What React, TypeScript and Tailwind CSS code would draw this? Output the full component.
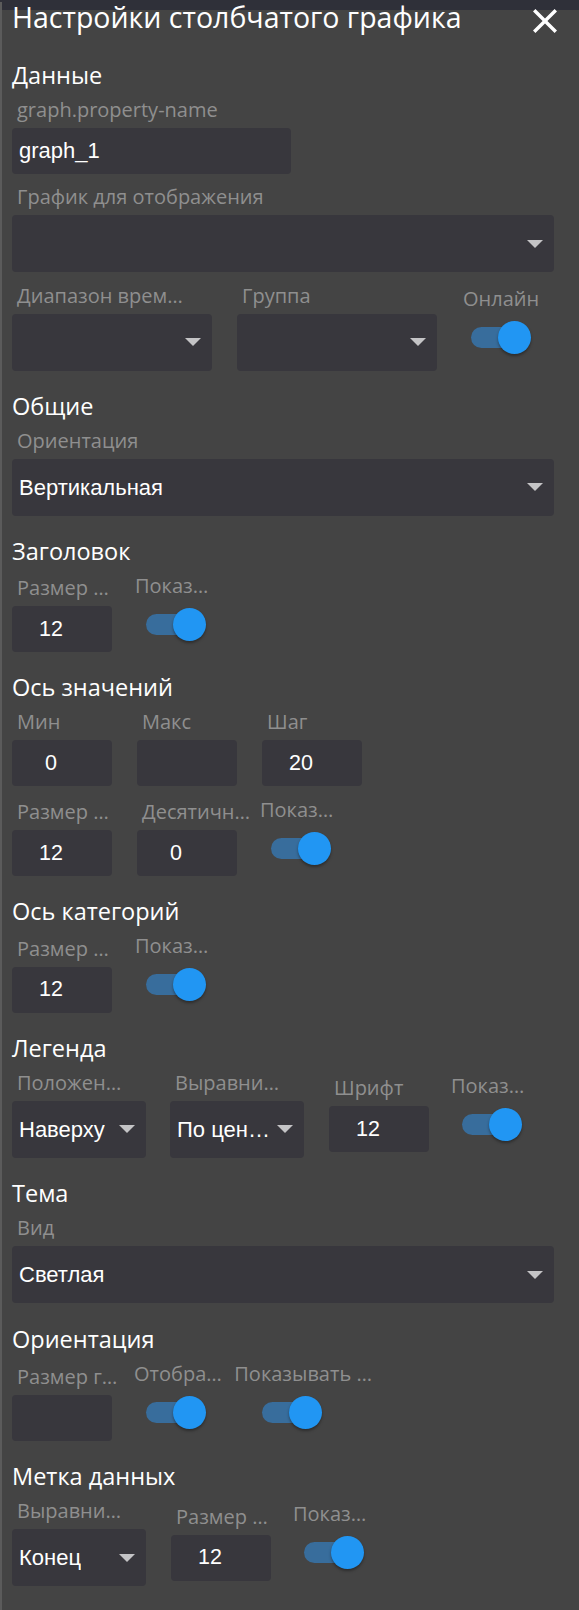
import React from 'react';

const VALUE_FONT = "font-['Liberation_Sans',Arial,sans-serif]";

function Heading({ children, className = '' }: { children: React.ReactNode; className?: string }) {
  return <h3 className={`text-[23.5px] leading-[28px] text-white font-normal ${className}`}>{children}</h3>;
}

function Label({ text, className = '' }: { text: string; className?: string }) {
  return (
    <div className={`whitespace-nowrap text-[20px] leading-[24px] text-[#8f8f8f] ${className}`}>{text}</div>
  );
}

function Arrow() {
  return (
    <svg width="16" height="8" viewBox="0 0 16 8" className="shrink-0">
      <path d="M0 0h16L8 8z" fill="#c4c4c6" />
    </svg>
  );
}

function SelectField({ label, value = '', width }: { label: string; value?: string; width: string }) {
  return (
    <div className={`flex flex-col ${width}`}>
      <Label text={label} className="pl-[5px]" />
      <div className="mt-[6px] flex h-[57px] items-center justify-between rounded bg-[#38373d] pl-[7px] pr-[11px]">
        <span className={`truncate text-[22px] text-white ${VALUE_FONT}`}>{value}</span>
        <Arrow />
      </div>
    </div>
  );
}

function NumberField({ label, value = '', className = '' }: { label: string; value?: string; className?: string }) {
  return (
    <div className={`flex w-[100px] flex-col ${className}`}>
      <Label text={label} className="pl-[5px]" />
      <input
        type="text"
        readOnly
        value={value}
        className={`mt-[6px] h-[46px] w-full rounded bg-[#38373d] pr-[22px] text-center text-[21.5px] text-white outline-none ${VALUE_FONT}`}
      />
    </div>
  );
}

function Toggle({ className = '' }: { className?: string }) {
  return (
    <div className={`relative h-[47px] w-[60px] ${className}`}>
      <div className="absolute left-0 top-[6px] h-[21px] w-[52px] rounded-full bg-[#386d9c]" />
      <div className="absolute left-[27px] top-0 h-[33px] w-[33px] rounded-full bg-[#2196f3] shadow-[0_2px_3px_rgba(0,0,0,0.35)]" />
    </div>
  );
}

function ToggleField({ label, className = '', toggleClass = 'ml-[11px]' }: { label: string; className?: string; toggleClass?: string }) {
  return (
    <div className={`flex flex-col items-start ${className}`}>
      <Label text={label} />
      <Toggle className={`mt-[10px] ${toggleClass}`} />
    </div>
  );
}

function Section({ title, className = '', children }: { title: string; className?: string; children: React.ReactNode }) {
  return (
    <section className={className}>
      <Heading>{title}</Heading>
      <div className="mt-[9px] flex flex-col gap-[11.5px]">{children}</div>
    </section>
  );
}

export default function App() {
  return (
    <div className="min-h-[1610px] w-[579px] bg-[#444444] font-['Open_Sans','Noto_Sans',sans-serif]">
      <div className="h-[10px] bg-[#2f3039]" />
      <div className="border-l-2 border-[#5b5b5b] pb-[24px] pl-[10px] pr-[25px]">
        {/* Header */}
        <div className="relative -mt-[8px] flex items-start justify-between">
          <h2 className="text-[28.5px] leading-[30px] text-white font-normal">Настройки столбчатого графика</h2>
          <svg viewBox="5 5 14 14" className="-mr-[3px] mt-[7px] h-[24px] w-[24px]">
            <path
              fill="#ffffff"
              d="M19 6.41L17.59 5 12 10.59 6.41 5 5 6.41 10.59 12 5 17.59 6.41 19 12 13.41 17.59 19 19 17.59 13.41 12z"
            />
          </svg>
        </div>

        <Section title="Данные" className="mt-[27.5px]">
          <div className="flex w-[279px] flex-col">
            <Label text="graph.property-name" className="pl-[5px]" />
            <input
              type="text"
              readOnly
              value="graph_1"
              className={`mt-[6px] h-[46px] w-full rounded bg-[#38373d] pl-[7px] text-[22px] text-white outline-none ${VALUE_FONT}`}
            />
          </div>
          <SelectField label="График для отображения" width="w-full" />
          <div className="flex items-center gap-[25px]">
            <SelectField label="Диапазон врем…" width="w-[200px]" />
            <SelectField label="Группа" width="w-[200px]" />
            <ToggleField label="Онлайн" className="ml-[1px]" toggleClass="ml-[8px]" />
          </div>
        </Section>

        <Section title="Общие" className="mt-[21px]">
          <SelectField label="Ориентация" value="Вертикальная" width="w-full" />
        </Section>

        <Section title="Заголовок" className="mt-[21px]">
          <div className="flex items-center gap-[25px]">
            <NumberField label="Размер …" value="12" />
            <ToggleField label="Показ…" className="-ml-[2px]" />
          </div>
        </Section>

        <Section title="Ось значений" className="mt-[18.5px]">
          <div className="flex items-center gap-[25px]">
            <NumberField label="Мин" value="0" />
            <NumberField label="Макс" />
            <NumberField label="Шаг" value="20" />
          </div>
          <div className="flex items-center gap-[25px]">
            <NumberField label="Размер …" value="12" />
            <NumberField label="Десятичн…" value="0" />
            <ToggleField label="Показ…" className="-ml-[2px]" />
          </div>
        </Section>

        <Section title="Ось категорий" className="mt-[18.5px]">
          <div className="flex items-center gap-[25px]">
            <NumberField label="Размер …" value="12" />
            <ToggleField label="Показ…" className="-ml-[2px]" />
          </div>
        </Section>

        <Section title="Легенда" className="mt-[18.5px]">
          <div className="flex items-center gap-[24px]">
            <SelectField label="Положен…" value="Наверху" width="w-[134px]" />
            <SelectField label="Выравни…" value="По цен…" width="w-[134px]" />
            <NumberField label="Шрифт" value="12" className="ml-[1px]" />
            <ToggleField label="Показ…" className="-ml-[2px]" />
          </div>
        </Section>

        <Section title="Тема" className="mt-[21.5px]">
          <SelectField label="Вид" value="Светлая" width="w-full" />
        </Section>

        <Section title="Ориентация" className="mt-[22px]">
          <div className="flex items-center gap-[25px]">
            <NumberField label="Размер г…" />
            <ToggleField label="Отобра…" className="-ml-[3px]" toggleClass="ml-[12px]" />
            <ToggleField label="Показывать …" className="-ml-[12.5px]" toggleClass="ml-[27.5px]" />
          </div>
        </Section>

        <Section title="Метка данных" className="mt-[19px]">
          <div className="flex items-center gap-[25px]">
            <SelectField label="Выравни…" value="Конец" width="w-[134px]" />
            <NumberField label="Размер …" value="12" />
            <ToggleField label="Показ…" className="-ml-[3px]" />
          </div>
        </Section>
      </div>
    </div>
  );
}
